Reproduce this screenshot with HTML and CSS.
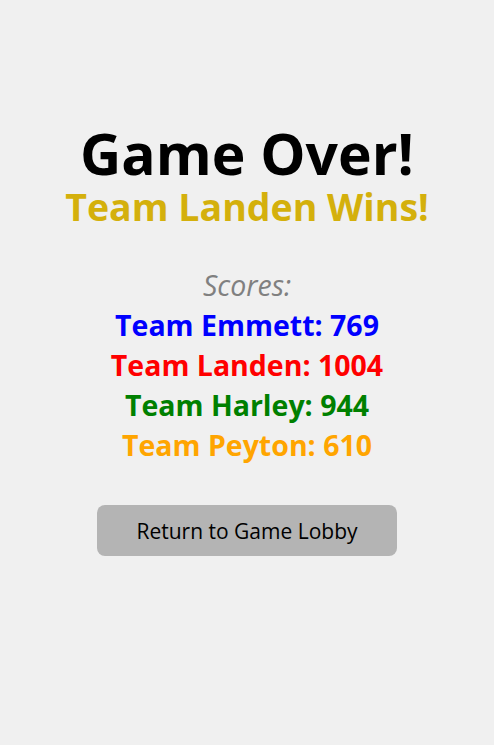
FILE: index.html
```html
<!DOCTYPE html>
<html>
<head>
<meta charset="utf-8">
<link rel="stylesheet" href="styles.css">
</head>
<body>
<main class="screen">
  <h1 class="title">Game Over!</h1>
  <h2 class="winner">Team Landen Wins!</h2>
  <section class="scores">
    <div class="scores-label">Scores:</div>
    <div class="score blue">Team Emmett: 769</div>
    <div class="score red">Team Landen: 1004</div>
    <div class="score green">Team Harley: 944</div>
    <div class="score orange">Team Peyton: 610</div>
  </section>
  <button class="lobby-btn">Return to Game Lobby</button>
</main>
</body>
</html>
```
FILE: styles.css
```css
html, body {
  margin: 0;
  padding: 0;
  background: #f0f0f0;
}
body {
  font-family: "Open Sans", "Noto Sans", sans-serif;
  width: 494px;
  height: 745px;
}
.screen {
  display: flex;
  flex-direction: column;
  align-items: center;
  padding-top: 121px;
}
.title {
  margin: 0;
  font-size: 57px;
  line-height: 64px;
  font-weight: 700;
  color: #000;
}
.winner {
  margin: 0;
  font-size: 37.5px;
  line-height: 44px;
  font-weight: 700;
  color: #d4b00c;
}
.scores {
  margin-top: 36px;
  display: flex;
  flex-direction: column;
  align-items: center;
}
.scores-label {
  font-size: 28.5px;
  line-height: 40px;
  font-style: italic;
  color: #808080;
}
.score {
  font-size: 28.5px;
  line-height: 40px;
  font-weight: 700;
}
.blue { color: #0000ff; }
.red { color: #ff0000; }
.green { color: #008000; }
.orange { color: #ffa500; }
.lobby-btn {
  margin-top: 40px;
  width: 300px;
  height: 51px;
  border: none;
  border-radius: 8px;
  background: #b4b4b4;
  color: #000;
  font-family: "Open Sans", "Noto Sans", sans-serif;
  font-size: 21px;
  padding: 0;
}
```
